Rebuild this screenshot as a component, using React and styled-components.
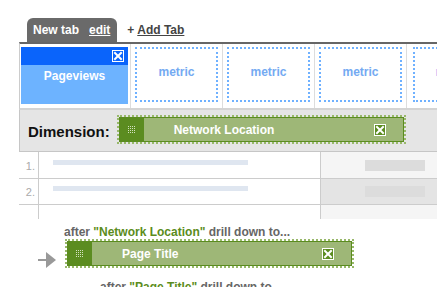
import React from "react";
import styled, { createGlobalStyle } from "styled-components";

const Global = createGlobalStyle`
  html, body { margin: 0; padding: 0; background: #fff; overflow: hidden; }
  body { font-family: "Liberation Sans", Arial, Helvetica, sans-serif; }
`;

const Page = styled.div`
  width: 560px;
  padding: 18px 0 0 19px;
`;

const TabBar = styled.div`
  display: flex;
  align-items: flex-end;
  height: 24px;
  padding-left: 8px;
`;

const Tab = styled.div`
  display: flex;
  gap: 10px;
  height: 24px;
  line-height: 24px;
  padding: 0 7px 0 6px;
  background: #6a6a6a;
  border-radius: 6px 6px 0 0;
  color: #fff;
  font-size: 12px;
  font-weight: bold;
`;

const Underlined = styled.span`
  text-decoration: underline;
`;

const AddTab = styled.div`
  margin-left: 10px;
  line-height: 24px;
  font-size: 12px;
  font-weight: bold;
  color: #444;
`;

const MetricStrip = styled.div`
  display: flex;
  height: 64px;
  border-top: 2px solid #666;
  border-left: 1px solid #ccc;
  border-bottom: 2px solid #d4d4d4;
`;

const MetricCell = styled.div`
  flex: 0 0 ${(p) => p.$w}px;
  box-sizing: border-box;
  border-right: 1px solid #ddd;
  padding: 3px ${(p) => p.$pr}px 0 ${(p) => p.$pl}px;
`;

const ActiveMetric = styled.div`
  height: 57px;
  display: flex;
  flex-direction: column;
  background: #6db3ff;
`;

const ActiveHead = styled.div`
  height: 18px;
  background: #0a64fb;
  display: flex;
  justify-content: flex-end;
  align-items: center;
  padding-right: 4px;
`;

const ActiveLabel = styled.div`
  padding-top: 4px;
  line-height: 14px;
  color: #fff;
  font-size: 12px;
  font-weight: bold;
  text-align: center;
`;

const MetricSlot = styled.div`
  height: 55px;
  box-sizing: border-box;
  border: 2px dotted #6fb1ff;
  padding-top: 16px;
  line-height: 14px;
  text-align: center;
  color: ${(p) => (p.$faded ? "#b9b4f4" : "#74aaf2")};
  font-size: 12px;
  font-weight: bold;
`;

const DimensionBar = styled.div`
  display: flex;
  align-items: flex-start;
  height: 36px;
  padding: 5px 0 0 8px;
  background: #e5e5e5;
  border-left: 1px solid #c6c6c6;
  border-bottom: 1px solid #c6c6c6;
`;

const DimensionLabel = styled.div`
  margin: 8px 7px 0 0;
  line-height: 18px;
  font-size: 15px;
  font-weight: bold;
  color: #111;
`;

const Pill = styled.div`
  width: 289px;
  height: 29px;
  box-sizing: border-box;
  border: 2px dotted #98b86a;
  flex: none;
`;

const PillInner = styled.div`
  height: 100%;
  box-sizing: border-box;
  border: 1px solid #5b8c20;
  border-left: none;
  background: #9eb777;
  display: flex;
  align-items: center;
`;

const Handle = styled.div`
  width: 25px;
  align-self: stretch;
  margin: -1px 0;
  background: #5b8c20;
  display: flex;
  align-items: center;
  justify-content: center;
`;

const PillText = styled.div`
  flex: 1;
  padding-left: 30px;
  color: #fff;
  font-size: 12px;
  font-weight: bold;
  line-height: 14px;
`;

const PillClose = styled.div`
  display: flex;
  margin-right: 17px;
`;

const Table = styled.div`
  display: flex;
  flex-direction: column;
`;

const Row = styled.div`
  display: flex;
  height: ${(p) => p.$h}px;
  box-sizing: border-box;
  border-bottom: ${(p) => (p.$last ? "none" : "1px solid #ccc")};
`;

const NumCell = styled.div`
  width: 20px;
  box-sizing: border-box;
  border-right: 1px solid #ccc;
  padding: ${(p) => p.$top}px 3px 0 0;
  text-align: right;
  font-size: 11px;
  line-height: 13px;
  color: #aaa;
`;

const MainCell = styled.div`
  width: 282px;
  box-sizing: border-box;
  border-right: 1px solid #ccc;
  padding: ${(p) => p.$top}px 0 0 14px;
`;

const SideCell = styled.div`
  flex: 1;
  background: ${(p) => (p.$shade ? "#e4e4e4" : "#f5f5f5")};
  padding: ${(p) => p.$top}px 0 0 44px;
`;

const BlueBar = styled.div`
  width: 195px;
  height: 5px;
  background: #dfe6f0;
`;

const GrayBar = styled.div`
  width: 60px;
  height: 11px;
  background: #dcdcdc;
`;

const DrillSection = styled.div`
  padding-left: 19px;
`;

const DrillLabel = styled.div`
  margin: ${(p) => p.$mt}px 0 0 ${(p) => p.$ml}px;
  line-height: 14px;
  font-size: 12px;
  font-weight: bold;
  color: #666;
`;

const Green = styled.span`
  color: #5b8c20;
`;

const DrillRow = styled.div`
  display: flex;
  align-items: flex-start;
`;

const ArrowWrap = styled.div`
  margin: 13px 9px 0 0;
  display: flex;
`;

const CloseIcon = ({ fill }) => (
  <svg width="12" height="12" viewBox="0 0 12 12">
    <rect x="0.5" y="0.5" width="11" height="11" fill={fill} stroke="#fff" strokeWidth="1" />
    <path d="M3 3 L9 9 M9 3 L3 9" stroke="#fff" strokeWidth="2" strokeLinecap="square" />
  </svg>
);

const Dots = () => {
  const dots = [];
  for (let r = 0; r < 4; r++)
    for (let c = 0; c < 4; c++)
      dots.push(<rect key={`${r}-${c}`} x={c * 2} y={r * 2} width="1" height="1" fill="#d3e0bf" />);
  return (
    <svg width="7" height="7" viewBox="0 0 7 7">
      {dots}
    </svg>
  );
};

const Arrow = () => (
  <svg width="18" height="16" viewBox="0 0 18 16">
    <rect x="0" y="7" width="9" height="2" fill="#999" />
    <polygon points="8,0 18,8 8,16" fill="#999" />
  </svg>
);

const DimPill = ({ label }) => (
  <Pill>
    <PillInner>
      <Handle>
        <Dots />
      </Handle>
      <PillText>{label}</PillText>
      <PillClose>
        <CloseIcon fill="#5b8c20" />
      </PillClose>
    </PillInner>
  </Pill>
);

const rows = [
  { n: "1.", h: 27, top: 8 },
  { n: "2.", h: 26, top: 7, shade: true },
  { n: "", h: 14, top: 0, last: true, empty: true },
];

export default function App() {
  return (
    <>
      <Global />
      <Page>
        <TabBar>
          <Tab>
            <span>New tab</span>
            <Underlined>edit</Underlined>
          </Tab>
          <AddTab>
            + <Underlined>Add Tab</Underlined>
          </AddTab>
        </TabBar>

        <MetricStrip>
          <MetricCell $w={111} $pl={1} $pr={2}>
            <ActiveMetric>
              <ActiveHead>
                <CloseIcon fill="#0a64fb" />
              </ActiveHead>
              <ActiveLabel>Pageviews</ActiveLabel>
            </ActiveMetric>
          </MetricCell>
          {[0, 1, 2].map((i) => (
            <MetricCell key={i} $w={92} $pl={4} $pr={4}>
              <MetricSlot>metric</MetricSlot>
            </MetricCell>
          ))}
          <MetricCell $w={92} $pl={6} $pr={4}>
            <MetricSlot $faded>metric</MetricSlot>
          </MetricCell>
        </MetricStrip>

        <DimensionBar>
          <DimensionLabel>Dimension:</DimensionLabel>
          <DimPill label="Network Location" />
        </DimensionBar>

        <Table>
          {rows.map((r, i) => (
            <Row key={i} $h={r.h} $last={r.last}>
              <NumCell $top={r.top}>{r.n}</NumCell>
              <MainCell $top={r.top}>{!r.empty && <BlueBar />}</MainCell>
              <SideCell $top={r.top} $shade={r.shade}>
                {!r.empty && <GrayBar />}
              </SideCell>
            </Row>
          ))}
        </Table>

        <DrillSection>
          <DrillLabel $mt={6} $ml={26}>
            after <Green>"Network Location"</Green> drill down to...
          </DrillLabel>
          <DrillRow>
            <ArrowWrap>
              <Arrow />
            </ArrowWrap>
            <DimPill label="Page Title" />
          </DrillRow>
          <DrillLabel $mt={12} $ml={62}>
            after <Green>"Page Title"</Green> drill down to...
          </DrillLabel>
        </DrillSection>
      </Page>
    </>
  );
}
